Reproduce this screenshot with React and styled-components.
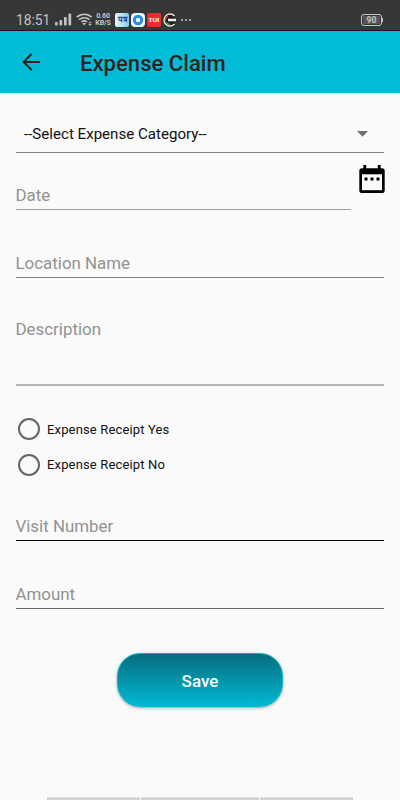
import React from 'react';
import styled, { createGlobalStyle } from 'styled-components';

const GlobalStyle = createGlobalStyle`
  *,
  *:before,
  *:after {
    box-sizing: border-box;
  }

  body {
    margin: 0;
    background: #fafafa;
    font-family: Roboto, 'Liberation Sans', sans-serif;
  }
`;

const Screen = styled.div`
  display: flex;
  flex-direction: column;
  width: 400px;
  height: 800px;
  overflow: hidden;
  background: #fafafa;
`;

const StatusBar = styled.div`
  display: flex;
  align-items: center;
  flex-shrink: 0;
  height: 31px;
  padding: 9px 17px 0 16px;
  background: #373737;
  border-bottom: 1px solid #2a1014;
  color: #c4c4c4;

  svg {
    display: block;
    flex-shrink: 0;
  }
`;

const Clock = styled.span`
  width: 39px;
  padding-top: 1px;
  font-size: 13.8px;
  line-height: 20px;
  white-space: nowrap;
`;

const Connection = styled.div`
  display: flex;
  align-items: center;
  gap: 4px;
`;

const Speed = styled.div`
  width: 18px;
  margin-left: 1px;
  font-size: 7px;
  font-weight: 700;
  line-height: 7px;
  letter-spacing: -0.1px;
  text-align: center;
  white-space: nowrap;
`;

const AppIcons = styled.div`
  display: flex;
  gap: 2px;
  margin-left: 3px;
`;

const AppIcon = styled.div`
  display: flex;
  align-items: center;
  justify-content: center;
  width: 14px;
  height: 14px;
  border-radius: ${({ $radius }) => $radius || '2px'};
  background: ${({ $color }) => $color};
  color: ${({ $ink }) => $ink || '#ffffff'};
  font-family: 'Liberation Serif', serif;
  font-size: ${({ $size }) => $size || '6px'};
  font-weight: 700;
  line-height: 14px;
`;

const More = styled.div`
  display: flex;
  gap: 2px;
  margin-left: 4px;

  i {
    width: 2px;
    height: 2px;
    border-radius: 50%;
    background: #c4c4c4;
  }
`;

const Battery = styled.div`
  display: flex;
  align-items: center;
  margin-left: auto;

  span {
    width: 21px;
    height: 12px;
    border: 1px solid #c4c4c4;
    border-radius: 3px;
    background: #565656;
    box-shadow: inset 0 0 0 1px #373737;
    font-size: 8.5px;
    font-weight: 700;
    line-height: 11px;
    text-align: center;
  }

  &:after {
    content: '';
    width: 1px;
    height: 4px;
    background: #c4c4c4;
  }
`;

const Toolbar = styled.header`
  display: flex;
  align-items: center;
  flex-shrink: 0;
  height: 62px;
  padding-left: 19px;
  background: #00bcd7;

  svg {
    margin-right: 37px;
  }
`;

const Title = styled.h1`
  margin: 0;
  padding-top: 2px;
  color: #33211f;
  font-size: 22.1px;
  font-weight: 500;
  line-height: 30px;
`;

const Form = styled.main`
  flex: 1;
  display: flex;
  flex-direction: column;
  padding: 0 16px;
`;

const Select = styled.div`
  display: flex;
  align-items: center;
  justify-content: space-between;
  height: 60px;
  padding: 22px 16px 0 8px;
  border-bottom: 1px solid #848484;
  color: #111111;
  font-size: 15.1px;
`;

const DateRow = styled.div`
  display: flex;
  justify-content: space-between;
`;

const Field = styled.div`
  display: flex;
  flex-direction: column;
  width: ${({ $width }) => $width || '100%'};
  height: ${({ $height }) => $height}px;
  padding-top: ${({ $top }) => $top}px;
  border-bottom: ${({ $line }) => $line || '1px solid #848484'};
  color: #929292;
  font-size: 16.9px;
  line-height: 22px;
  text-indent: -0.5px;
`;

const CalendarButton = styled.div`
  width: 26px;
  margin: 12px -1px 0 0;
`;

const Radios = styled.div`
  display: flex;
  flex-direction: column;
  gap: 13px;
  padding: 32px 0 0 2px;
`;

const Radio = styled.div`
  display: flex;
  align-items: center;
  height: 22.5px;
  color: #111111;
  font-size: 13px;
  letter-spacing: 0.15px;

  &:before {
    content: '';
    width: 22px;
    height: 22px;
    margin-right: 7px;
    border: 2px solid #666666;
    border-radius: 50%;
  }
`;

const SaveButton = styled.button`
  align-self: center;
  width: 166px;
  height: 54px;
  margin-top: 44px;
  padding: 1px 0 0;
  border: 1px solid #08b3ca;
  border-radius: 23px;
  background: linear-gradient(#056c7d, #00bad4);
  box-shadow: 0 1px 3px rgba(0, 0, 0, 0.35);
  color: #ffffff;
  font-family: inherit;
  font-size: 17px;
  font-weight: 500;
`;

const BottomTabs = styled.div`
  display: grid;
  grid-template-columns: 93px 118px 93px;
  gap: 1px;
  flex-shrink: 0;
  height: 3px;
  margin-left: 47px;

  i {
    background: #d3d3d3;
    border-top: 1px solid #dedede;
  }
`;

const SignalIcon = () => (
  <svg width="17" height="13" viewBox="0 0 17 13" fill="#c4c4c4">
    <rect x="0" y="9" width="2.7" height="3.5" rx="1" />
    <rect x="4.5" y="7" width="2.7" height="5.5" rx="1" />
    <rect x="9" y="4" width="2.7" height="8.5" rx="1" />
    <rect x="13.5" y="0.5" width="2.7" height="12" rx="1" />
  </svg>
);

const WifiIcon = () => (
  <svg width="17" height="13" viewBox="0 0 17 13" fill="none" stroke="#c4c4c4" strokeWidth="1.6">
    <path d="M0.8 4.2C5 0.2 11.5 0.2 15.7 4.2" />
    <path d="M3 6.7C6 4 10.5 4 13.5 6.7" />
    <path d="M5.4 9C7.2 7.5 9.3 7.5 11 9" />
    <path d="M6.4 10h3.6L8.2 12.4z" fill="#c4c4c4" stroke="none" />
    <path d="M12.3 10.3L14 8.5l1.7 1.8zM12.3 11L14 12.8l1.7-1.8z" fill="#c4c4c4" stroke="none" />
  </svg>
);

const BackIcon = () => (
  <svg width="24" height="24" viewBox="0 0 24 24" fill="none" stroke="#2b1f1f" strokeWidth="1.9">
    <path d="M21 12H4.8M12.6 4L4.6 12l8 8" />
  </svg>
);

const CalendarIcon = () => (
  <svg width="26" height="29" viewBox="0 0 26 29">
    <path d="M4.4 0h2.8v3.2h11.6V0h2.8v3.2h1.5Q25.7 3.2 25.7 6v19.2Q25.7 28 23.1 28H2.9Q0.3 28 0.3 25.2V6Q0.3 3.2 2.9 3.2h1.5z" />
    <path d="M3 9.3h20v15.9H3z" fill="#fafafa" />
    <path d="M5.5 12.4h3v3h-3zM11.5 12.4h3v3h-3zM17.5 12.4h3v3h-3z" />
  </svg>
);

const App = () => (
  <>
    <GlobalStyle />
    <Screen>
      <StatusBar>
        <Clock>18:51</Clock>
        <Connection>
          <SignalIcon />
          <WifiIcon />
        </Connection>
        <Speed>
          0.60
          <br />
          KB/S
        </Speed>
        <AppIcons>
          <AppIcon $color="linear-gradient(90deg, #e8f6fc, #8cc9e8)" $ink="#12448e" $size="8px">
            पत्र
          </AppIcon>
          <AppIcon $color="#f4f8fb" $radius="4px">
            <svg width="12" height="12" viewBox="0 0 12 12" fill="none">
              <circle cx="6" cy="6" r="3.7" stroke="#2b8ce6" strokeWidth="3" />
            </svg>
          </AppIcon>
          <AppIcon $color="#e62e2e">TOI</AppIcon>
          <AppIcon $color="transparent">
            <svg width="14" height="14" viewBox="0 0 14 14">
              <circle cx="7" cy="7" r="5.6" fill="#1c1c1c" />
              <path d="M11.5 3A6 6 0 1 0 11.5 11" fill="none" stroke="#e9e4d6" strokeWidth="1.4" />
              <path d="M5 3.2A4.5 4.5 0 0 0 2.6 7.5" fill="none" stroke="#d4483b" strokeWidth="1.2" />
              <path d="M3 9A4.5 4.5 0 0 0 7 11.4" fill="none" stroke="#4aa36c" strokeWidth="1.2" />
              <path d="M5 7h8" stroke="#eeeeee" strokeWidth="2.6" />
            </svg>
          </AppIcon>
        </AppIcons>
        <More>
          <i />
          <i />
          <i />
        </More>
        <Battery>
          <span>90</span>
        </Battery>
      </StatusBar>
      <Toolbar>
        <BackIcon />
        <Title>Expense Claim</Title>
      </Toolbar>
      <Form>
        <Select>
          --Select Expense Category--
          <svg width="11" height="6" viewBox="0 0 11 6">
            <path d="M0 0h11L5.5 5.7z" fill="#707070" />
          </svg>
        </Select>
        <DateRow>
          <Field $width="335px" $height={57} $top={31} $line="1px solid #a0a0a0">
            Date
          </Field>
          <CalendarButton>
            <CalendarIcon />
          </CalendarButton>
        </DateRow>
        <Field $height={68} $top={42}>
          Location Name
        </Field>
        <Field $height={108} $top={40} $line="2px solid #b5b5b5">
          Description
        </Field>
        <Radios>
          <Radio>Expense Receipt Yes</Radio>
          <Radio>Expense Receipt No</Radio>
        </Radios>
        <Field $height={65} $top={39} $line="1px solid #000000">
          Visit Number
        </Field>
        <Field $height={68} $top={42} $line="1px solid #666666">
          Amount
        </Field>
        <SaveButton>Save</SaveButton>
      </Form>
      <BottomTabs>
        <i />
        <i />
        <i />
      </BottomTabs>
    </Screen>
  </>
);

export default App;
